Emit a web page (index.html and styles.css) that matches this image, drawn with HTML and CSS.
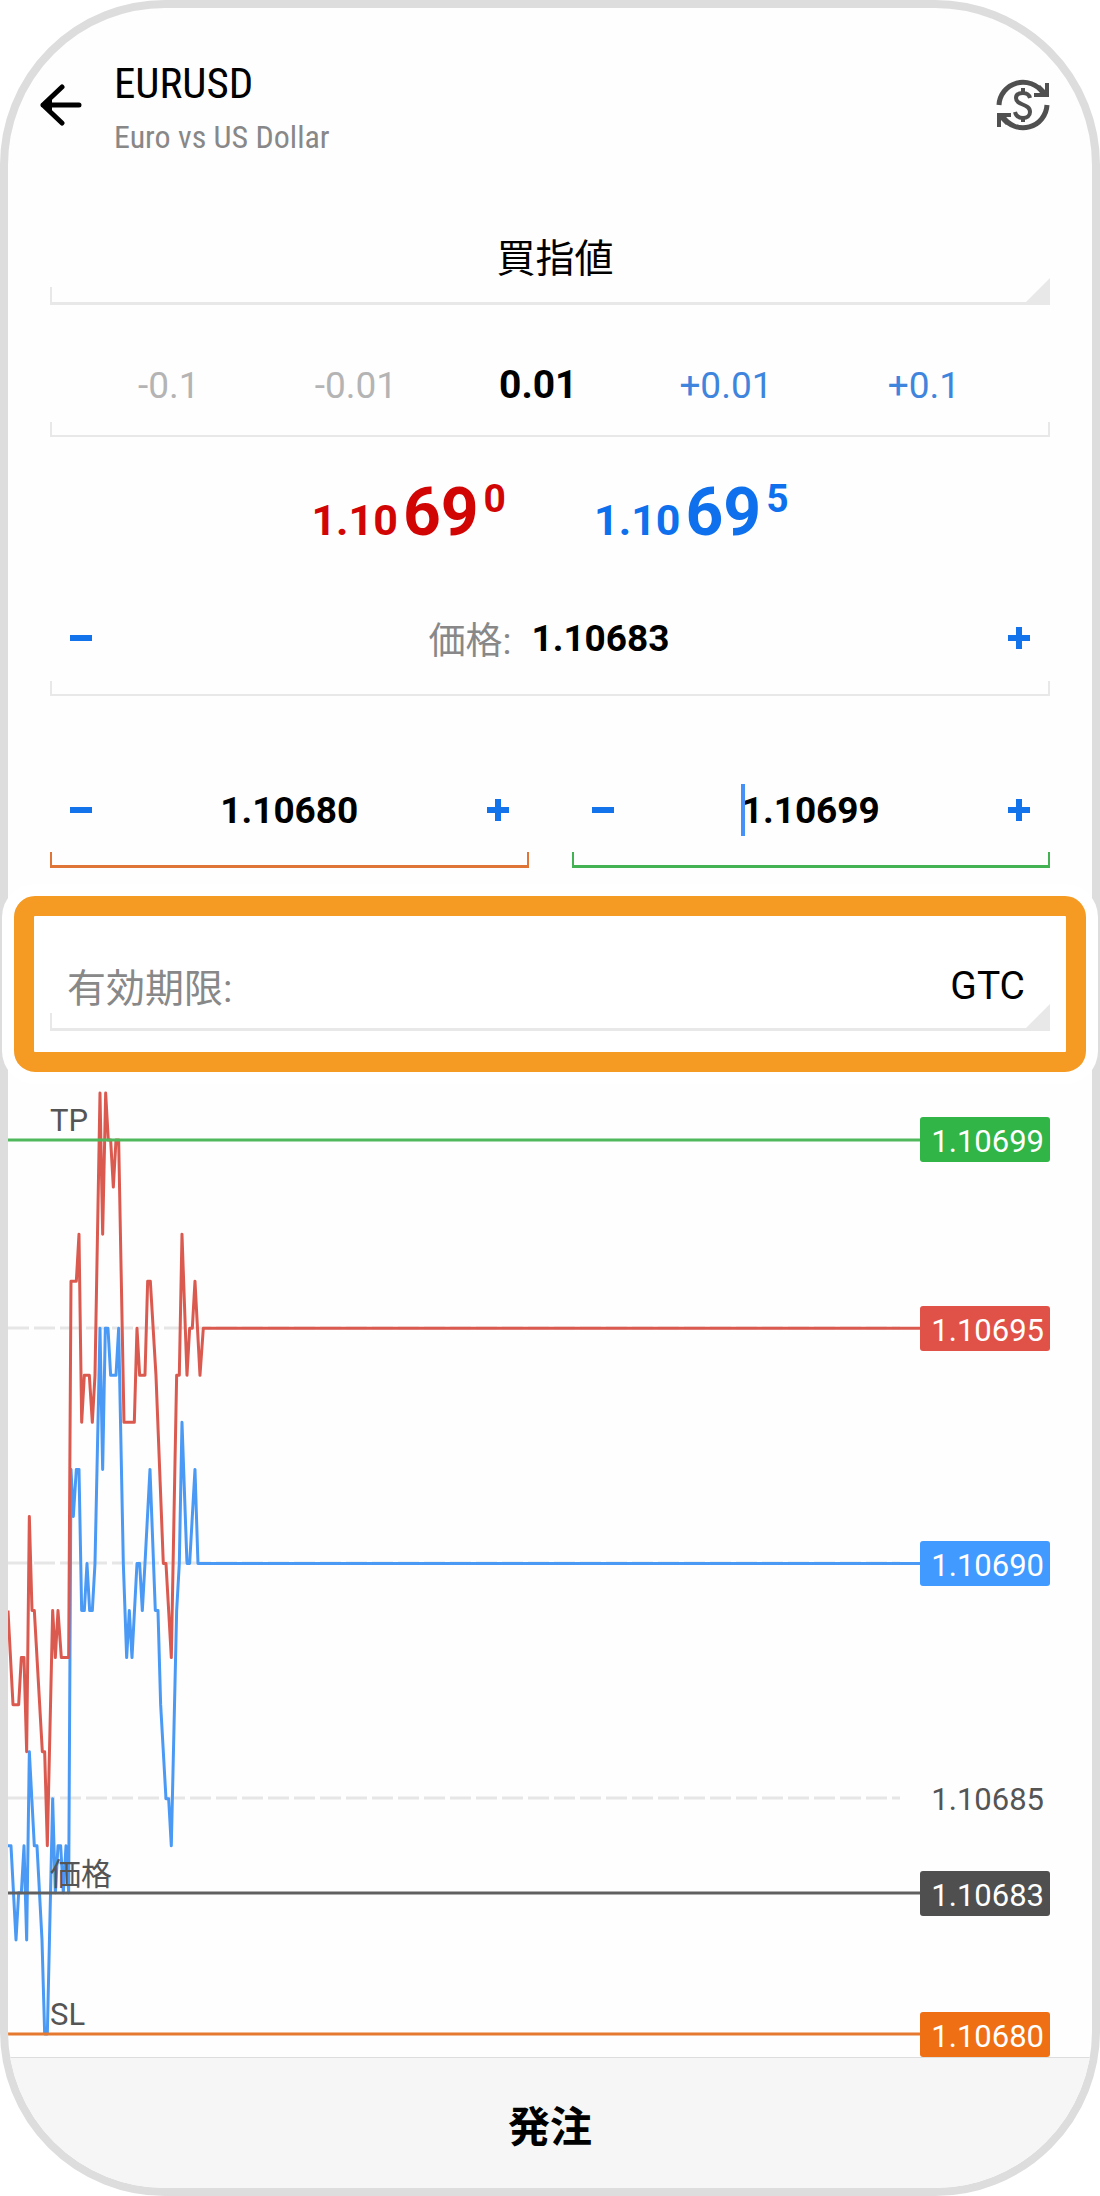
FILE: index.html
```html
<!DOCTYPE html>
<html lang="ja">
<head>
    <meta charset="UTF-8">
    <meta name="viewport" content="width=device-width, initial-scale=1.0">
    <title>EURUSD - 発注</title>
    <link rel="stylesheet" href="styles.css">
</head>
<body>
    <form class="phone">
        <header class="header">
            <button type="button" class="icon-btn" aria-label="戻る">
                <svg width="42" height="42" viewBox="0 0 42 42" fill="none" stroke="#000" stroke-width="5" stroke-linecap="round" stroke-linejoin="round">
                    <path d="M22 3 L3 21 L22 39 M3 21 H39"/>
                    <path d="M3 21 L12 13 V29 Z" fill="#000" stroke="none"/>
                </svg>
            </button>
            <div class="symbol">
                <h1>EURUSD</h1>
                <p>Euro vs US Dollar</p>
            </div>
            <button type="button" class="icon-btn" aria-label="通貨切替">
                <svg width="54" height="54" viewBox="0 0 54 54" fill="none" stroke="#505050" stroke-width="5">
                    <path d="M3 27 A24 24 0 0 1 47 15"/>
                    <path d="M51 27 A24 24 0 0 1 7 39"/>
                    <path d="M38 19 V15 H45 L41 10 L44 7 L49 12 V5 H53 V19 Z" fill="#505050" stroke="none"/>
                    <path d="M15 35 V39 H9 L13 44 L10 47 L5 42 V49 H1 V35 Z" fill="#505050" stroke="none"/>
                    <path d="M34 20 C33 16 30 15 27 15 C22 15 20 17 20 20 C20 28 34 25 34 34 C34 38 31 40 27 40 C23 40 20 38 19 34 M27 10 V16 M27 39 V44" stroke-width="4"/>
                </svg>
            </button>
        </header>

        <div class="field dropdown order-type">
            <select aria-label="注文種別">
                <option>買指値</option>
            </select>
        </div>

        <div class="field volume">
            <button type="button" class="step down">-0.1</button>
            <button type="button" class="step down">-0.01</button>
            <input type="text" value="0.01" aria-label="数量">
            <button type="button" class="step up">+0.01</button>
            <button type="button" class="step up">+0.1</button>
        </div>

        <div class="quotes">
            <div class="quote bid">
                <span>1.10</span><span class="big">69</span><span class="pip">0</span>
            </div>
            <div class="quote ask">
                <span>1.10</span><span class="big">69</span><span class="pip">5</span>
            </div>
        </div>

        <div class="field stepper">
            <button type="button" class="minus" aria-label="価格を下げる"></button>
            <div class="price">
                <label for="price">価格:</label>
                <input type="text" id="price" value="1.10683">
            </div>
            <button type="button" class="plus" aria-label="価格を上げる"></button>
        </div>

        <div class="stops">
            <div class="field stepper sl">
                <button type="button" class="minus" aria-label="SLを下げる"></button>
                <input type="text" value="1.10680" aria-label="SL">
                <button type="button" class="plus" aria-label="SLを上げる"></button>
            </div>
            <div class="field stepper tp">
                <button type="button" class="minus" aria-label="TPを下げる"></button>
                <div class="editing">
                    <input type="text" value="1.10699" aria-label="TP">
                </div>
                <button type="button" class="plus" aria-label="TPを上げる"></button>
            </div>
        </div>

        <div class="highlight">
            <div class="field dropdown expiry">
                <label for="expiry">有効期限:</label>
                <select id="expiry">
                    <option>GTC</option>
                </select>
            </div>
        </div>

        <div class="bottom">
            <svg class="chart" viewBox="0 0 1084 970" role="img" aria-label="EURUSD チャート">
                <!-- grid -->
                <g class="grid">
                    <path d="M0 241 H892"/>
                    <path d="M0 476 H892"/>
                    <path d="M0 711 H892"/>
                </g>

                <!-- bid / ask ticks, y is in pips above 1.10680 -->
                <polyline class="tick blue" transform="matrix(0.3333 0 0 -47.05 -8 947)" points="24,4 33,4 48,2 56,3 64,3 72,4 80,2 88,6 103,4 111,4 126,2 134,0 142,0 158,5 166,3 174,4 182,4 190,3 198,4 206,3 213,12 220,11 229,12 237,12 245,9 253,9 261,10 269,9 277,9 285,10 300,15 308,12 316,15 324,15 332,14 348,14 356,15 370,10 380,8 388,9 396,8 411,10 419,10 427,9 435,10 450,12 466,9 474,9 482,7 498,5 506,5 514,4 530,9 538,10 546,13 561,10 569,10 585,12 594,10 2784,10"/>
                <polyline class="tick red" transform="matrix(0.3333 0 0 -47.05 -8 947)" points="24,9 39,7 56,7 64,8 72,8 80,6 88,11 96,9 103,9 127,6 134,6 142,4 158,9 166,8 174,9 184,8 206,8 213,16 229,16 237,17 245,13 253,14 268,14 277,13 285,14 300,20 308,17 317,20 325,19 332,19 340,18 348,19 356,19 372,13 403,13 411,15 419,14 435,14 443,16 451,16 468,14 490,10 498,10 514,8 530,14 538,14 546,17 561,14 569,15 577,15 585,16 600,14 610,15 2784,15"/>

                <!-- levels -->
                <path class="level green" d="M0 53 H912"/>
                <path class="level dark" d="M0 806 H912"/>
                <path class="level orange" d="M0 947 H912"/>
                <text x="42" y="44">TP</text>
                <text x="42" y="798">価格</text>
                <text x="42" y="938">SL</text>

                <!-- price scale -->
                <g class="tag green">
                    <rect x="912" y="30" width="130" height="45" rx="3"/>
                    <text x="1036" y="65">1.10699</text>
                </g>
                <g class="tag red">
                    <rect x="912" y="219" width="130" height="45" rx="3"/>
                    <text x="1036" y="254">1.10695</text>
                </g>
                <g class="tag blue">
                    <rect x="912" y="454" width="130" height="45" rx="3"/>
                    <text x="1036" y="489">1.10690</text>
                </g>
                <g class="tag plain">
                    <text x="1036" y="723">1.10685</text>
                </g>
                <g class="tag dark">
                    <rect x="912" y="784" width="130" height="45" rx="3"/>
                    <text x="1036" y="819">1.10683</text>
                </g>
                <g class="tag orange">
                    <rect x="912" y="925" width="130" height="45" rx="3"/>
                    <text x="1036" y="960">1.10680</text>
                </g>
            </svg>
            <button type="submit" class="submit">発注</button>
        </div>
    </form>
</body>
</html>
```
FILE: styles.css
```css
* {
    box-sizing: border-box;
}

body {
    margin: 0;
    background: #fff;
    color: #000;
    font-family: Roboto, "Noto Sans CJK JP", sans-serif;
    font-size: 37px;
}

button, input, select {
    margin: 0;
    padding: 0;
    border: none;
    background: none;
    color: inherit;
    font: inherit;
    outline: none;
    appearance: none;
}

button {
    cursor: pointer;
}

.phone {
    min-height: 100vh;
    border: 8px solid #ddd;
    border-radius: 165px;
    background: #fefefe;
}

/* header */
.header {
    display: flex;
    align-items: flex-start;
    padding: 48px 42px 0 32px;
}

.icon-btn {
    display: flex;
    align-items: center;
    height: 98px;
}

.symbol {
    flex: 1;
    margin-left: 32px;
    font-family: "Roboto Condensed", Roboto, sans-serif;
}

.symbol h1 {
    margin: 0;
    font-size: 43px;
    font-weight: 400;
    line-height: 54px;
}

.symbol p {
    margin: 0;
    color: #888;
    font-size: 32px;
    line-height: 54px;
}

/* fields with a bracket line underneath */
.field {
    position: relative;
    display: flex;
    align-items: center;
    margin: 0 42px;
}

.field::after {
    content: "";
    position: absolute;
    left: 0;
    right: 0;
    bottom: 0;
    height: 13px;
    border: 2px solid #e8e8e8;
    border-top: none;
    pointer-events: none;
}

.dropdown::after {
    height: 15px;
    border-bottom-width: 3px;
    border-right: none;
}

/* corner triangle */
.dropdown::before {
    content: "";
    position: absolute;
    right: 0;
    bottom: 0;
    width: 27px;
    height: 27px;
    background: #e8e8e8;
    clip-path: polygon(100% 0, 100% 100%, 0 100%);
    pointer-events: none;
}

.dropdown {
    font-size: 39px;
}

.dropdown select {
    flex: 1;
    line-height: 60px;
}

.order-type {
    margin-top: 47px;
    padding: 18px 0 16px;
}

.order-type select {
    padding-left: 10px;
    text-align-last: center;
}

.volume {
    justify-content: space-between;
    margin-top: 28px;
    padding: 22px 90px 22px 88px;
}

.volume input {
    width: 84px;
    margin: 0 -16px;
    font-size: 39px;
    font-weight: 700;
    line-height: 60px;
    text-align: center;
}

.step.down {
    color: #b4b4b4;
}

.step.up {
    color: #3f85dd;
}

/* bid / ask */
.quotes {
    display: flex;
    justify-content: center;
    gap: 88px;
    padding: 43px 0 27px;
}

.quote {
    display: flex;
    align-items: baseline;
    gap: 5px;
    font-size: 43px;
    font-weight: 700;
    line-height: 66px;
}

.quote .big {
    font-size: 66px;
}

.quote .pip {
    align-self: flex-start;
    font-size: 39px;
    line-height: 39px;
}

.bid {
    color: #d20505;
}

.ask {
    color: #0f70ee;
}

/* steppers */
.stepper {
    justify-content: space-between;
    padding: 28px 20px;
}

.stepper input {
    width: 142px;
    padding-top: 2px;
    font-weight: 700;
    line-height: 58px;
    text-align: center;
}

.price {
    display: flex;
    align-items: center;
    gap: 18px;
}

.price label,
.expiry label {
    color: #888;
}

.minus, .plus {
    width: 22px;
    height: 22px;
    background: linear-gradient(#1273eb, #1273eb) center / 22px 6px no-repeat;
}

.plus {
    background:
        linear-gradient(#1273eb, #1273eb) center / 22px 6px no-repeat,
        linear-gradient(#1273eb, #1273eb) center / 6px 22px no-repeat;
}

.stops {
    display: grid;
    grid-template-columns: 1fr 1fr;
    gap: 43px;
    margin: 56px 42px 0;
}

.stops .field {
    margin: 0;
}

.stops .field::after {
    border-bottom-width: 3px;
}

.sl::after {
    border-color: #df7638;
}

.tp::after {
    border-color: #43b253;
}

.editing {
    position: relative;
}

/* text cursor */
.editing::before {
    content: "";
    position: absolute;
    left: 1px;
    top: 4px;
    width: 4px;
    height: 52px;
    background: #4691f7;
}

/* expiry */
.highlight {
    position: relative;
    margin: 28px 6px 0;
    padding: 23px 16px 21px;
    border: 20px solid #f59b23;
    border-radius: 21px;
    background: #fff;
    box-shadow: 0 0 0 12px #fff;
}

.expiry {
    margin: 0;
    padding: 16px 25px 16px 17px;
}

.expiry select {
    padding-top: 3px;
    line-height: 57px;
    text-align-last: right;
}

/* chart */
.bottom {
    overflow: hidden;
    margin-top: 15px;
    border-radius: 0 0 157px 157px;
}

.chart {
    display: block;
    width: 100%;
    font-size: 31px;
    fill: #555;
}

.grid path {
    stroke: #e6e6e6;
    stroke-width: 3;
    stroke-dasharray: 21 5;
}

.tick {
    fill: none;
    stroke-width: 3px;
    stroke-linejoin: round;
    vector-effect: non-scaling-stroke;
}

.level {
    stroke-width: 3;
}

.tick.red { stroke: #db5a50; }
.tick.blue { stroke: #4a9af5; }
.level.green { stroke: #4fb75c; }
.level.dark { stroke: #606060; }
.level.orange { stroke: #e5792f; }

.tag text {
    fill: #fff;
    text-anchor: end;
}

.tag.plain text { fill: #555; }
.tag.green rect { fill: #30b546; }
.tag.red rect { fill: #e05248; }
.tag.blue rect { fill: #409aff; }
.tag.dark rect { fill: #4f4f4f; }
.tag.orange rect { fill: #ef6f14; }

.submit {
    display: block;
    width: 100%;
    padding: 40px 0 31px;
    border-top: 1px solid #ddd;
    background: #f6f6f6;
    font-size: 42px;
    font-weight: 700;
    line-height: 59px;
}
```
